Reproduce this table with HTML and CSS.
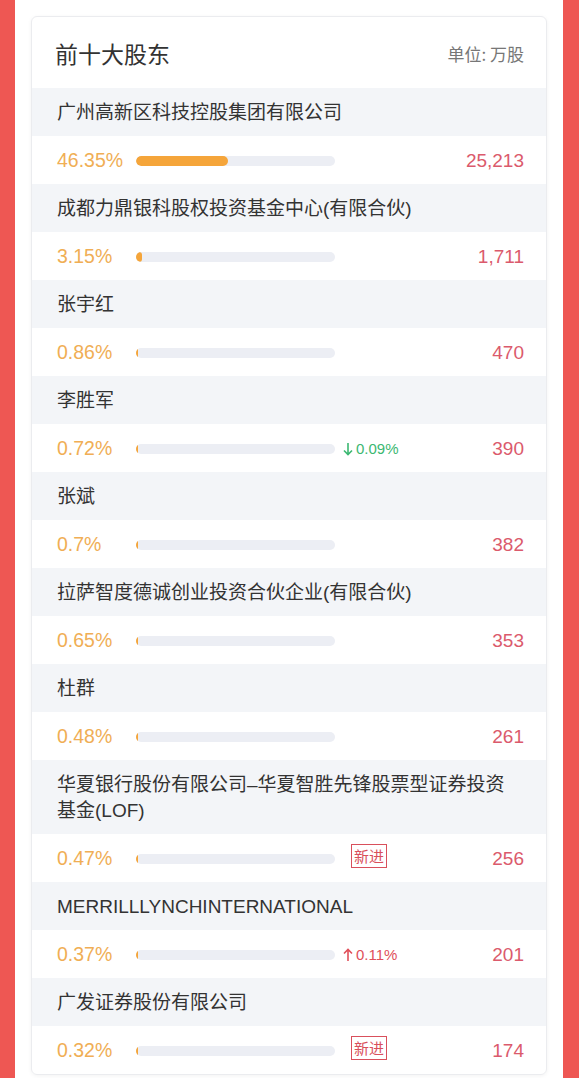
FILE: index.html
```html
<!DOCTYPE html>
<html lang="zh-CN">
<head>
<meta charset="utf-8">
<title>前十大股东</title>
<link rel="stylesheet" href="styles.css">
</head>
<body>
<div class="page">
  <section class="card">
    <header class="card-head">
      <h2 class="title">前十大股东</h2>
      <span class="unit">单位: 万股</span>
    </header>
    <ul class="holders">
      <li class="holder">
        <div class="name">广州高新区科技控股集团有限公司</div>
        <div class="stats"><span class="pct">46.35%</span><span class="bar"><span class="fill" style="width:46.35%"></span></span><span class="chg"></span><span class="amt">25,213</span></div>
      </li>
      <li class="holder">
        <div class="name">成都力鼎银科股权投资基金中心(有限合伙)</div>
        <div class="stats"><span class="pct">3.15%</span><span class="bar"><span class="fill" style="width:3.15%"></span></span><span class="chg"></span><span class="amt">1,711</span></div>
      </li>
      <li class="holder">
        <div class="name">张宇红</div>
        <div class="stats"><span class="pct">0.86%</span><span class="bar"><span class="fill" style="width:0.86%"></span></span><span class="chg"></span><span class="amt">470</span></div>
      </li>
      <li class="holder">
        <div class="name">李胜军</div>
        <div class="stats"><span class="pct">0.72%</span><span class="bar"><span class="fill" style="width:0.72%"></span></span><span class="chg down"><svg class="arrow" viewBox="0 0 10 14" width="10" height="14"><path d="M5 1V12.5M1 8.5L5 12.5L9 8.5" fill="none" stroke="currentColor" stroke-width="1.6"/></svg>0.09%</span><span class="amt">390</span></div>
      </li>
      <li class="holder">
        <div class="name">张斌</div>
        <div class="stats"><span class="pct">0.7%</span><span class="bar"><span class="fill" style="width:0.7%"></span></span><span class="chg"></span><span class="amt">382</span></div>
      </li>
      <li class="holder">
        <div class="name">拉萨智度德诚创业投资合伙企业(有限合伙)</div>
        <div class="stats"><span class="pct">0.65%</span><span class="bar"><span class="fill" style="width:0.65%"></span></span><span class="chg"></span><span class="amt">353</span></div>
      </li>
      <li class="holder">
        <div class="name">杜群</div>
        <div class="stats"><span class="pct">0.48%</span><span class="bar"><span class="fill" style="width:0.48%"></span></span><span class="chg"></span><span class="amt">261</span></div>
      </li>
      <li class="holder">
        <div class="name">华夏银行股份有限公司–华夏智胜先锋股票型证券投资基金(LOF)</div>
        <div class="stats"><span class="pct">0.47%</span><span class="bar"><span class="fill" style="width:0.47%"></span></span><span class="chg"><span class="badge">新进</span></span><span class="amt">256</span></div>
      </li>
      <li class="holder">
        <div class="name">MERRILLLYNCHINTERNATIONAL</div>
        <div class="stats"><span class="pct">0.37%</span><span class="bar"><span class="fill" style="width:0.37%"></span></span><span class="chg up"><svg class="arrow" viewBox="0 0 10 14" width="10" height="14"><path d="M5 13V1.5M1 5.5L5 1.5L9 5.5" fill="none" stroke="currentColor" stroke-width="1.6"/></svg>0.11%</span><span class="amt">201</span></div>
      </li>
      <li class="holder">
        <div class="name">广发证券股份有限公司</div>
        <div class="stats"><span class="pct">0.32%</span><span class="bar"><span class="fill" style="width:0.32%"></span></span><span class="chg"><span class="badge">新进</span></span><span class="amt">174</span></div>
      </li>
    </ul>
  </section>
</div>
</body>
</html>
```

FILE: styles.css
```css
* { box-sizing: border-box; }
html, body { margin: 0; padding: 0; }
body {
  background: #ee5753;
  font-family: "Liberation Sans", "Noto Sans CJK SC", sans-serif;
  color: #333;
}
.page {
  margin: 0 16px 0 15px;
  background: #fff;
  min-height: 100vh;
  padding: 16px 16px 6px 16px;
}
.card {
  border: 1px solid #ebecef;
  border-radius: 6px;
  box-shadow: 0 1px 4px rgba(0, 0, 0, 0.05);
  overflow: hidden;
}
.card-head {
  height: 71px;
  display: flex;
  align-items: center;
  justify-content: space-between;
  padding: 0 22px 0 23px;
}
.title {
  margin: 0;
  font-family: "Noto Sans CJK SC", sans-serif;
  font-weight: 400;
  font-size: 23px;
  color: #333;
  padding-top: 1px;
}
.unit {
  font-family: "Noto Sans CJK SC", sans-serif;
  font-size: 17px;
  color: #777;
  padding-top: 1px;
}
.holders { list-style: none; margin: 0; padding: 0; }
.name {
  background: #f3f5f8;
  padding: 12px 24px 10px 25px;
  font-family: "Liberation Sans", "Noto Sans CJK SC", sans-serif;
  font-size: 19px;
  line-height: 26px;
  color: #333;
}
.stats {
  height: 48px;
  display: flex;
  align-items: center;
  padding: 1px 22px 0 25px;
}
.pct {
  width: 79px;
  flex: none;
  font-size: 19.5px;
  color: #f0ae55;
}
.bar {
  width: 199px;
  height: 10px;
  flex: none;
  border-radius: 5px;
  background: #eceef4;
  overflow: hidden;
  display: flex;
}
.fill {
  min-width: 2px;
  height: 100%;
  border-radius: 5px;
  background: #f5a53a;
}
.chg {
  flex: 1;
  display: flex;
  align-items: center;
  font-size: 15px;
  padding-left: 8px;
}
.chg.down { color: #3cb872; }
.chg.up { color: #e0505a; }
.arrow { margin-right: 3px; }
.badge {
  margin-left: 8px;
  margin-top: -5px;
  border: 1px solid #d9505c;
  color: #d9505c;
  font-family: "Noto Sans CJK SC", sans-serif;
  font-size: 15px;
  line-height: 22px;
  padding: 0 2px;
}
.amt {
  font-size: 19px;
  color: #db5a6c;
  text-align: right;
}
```
